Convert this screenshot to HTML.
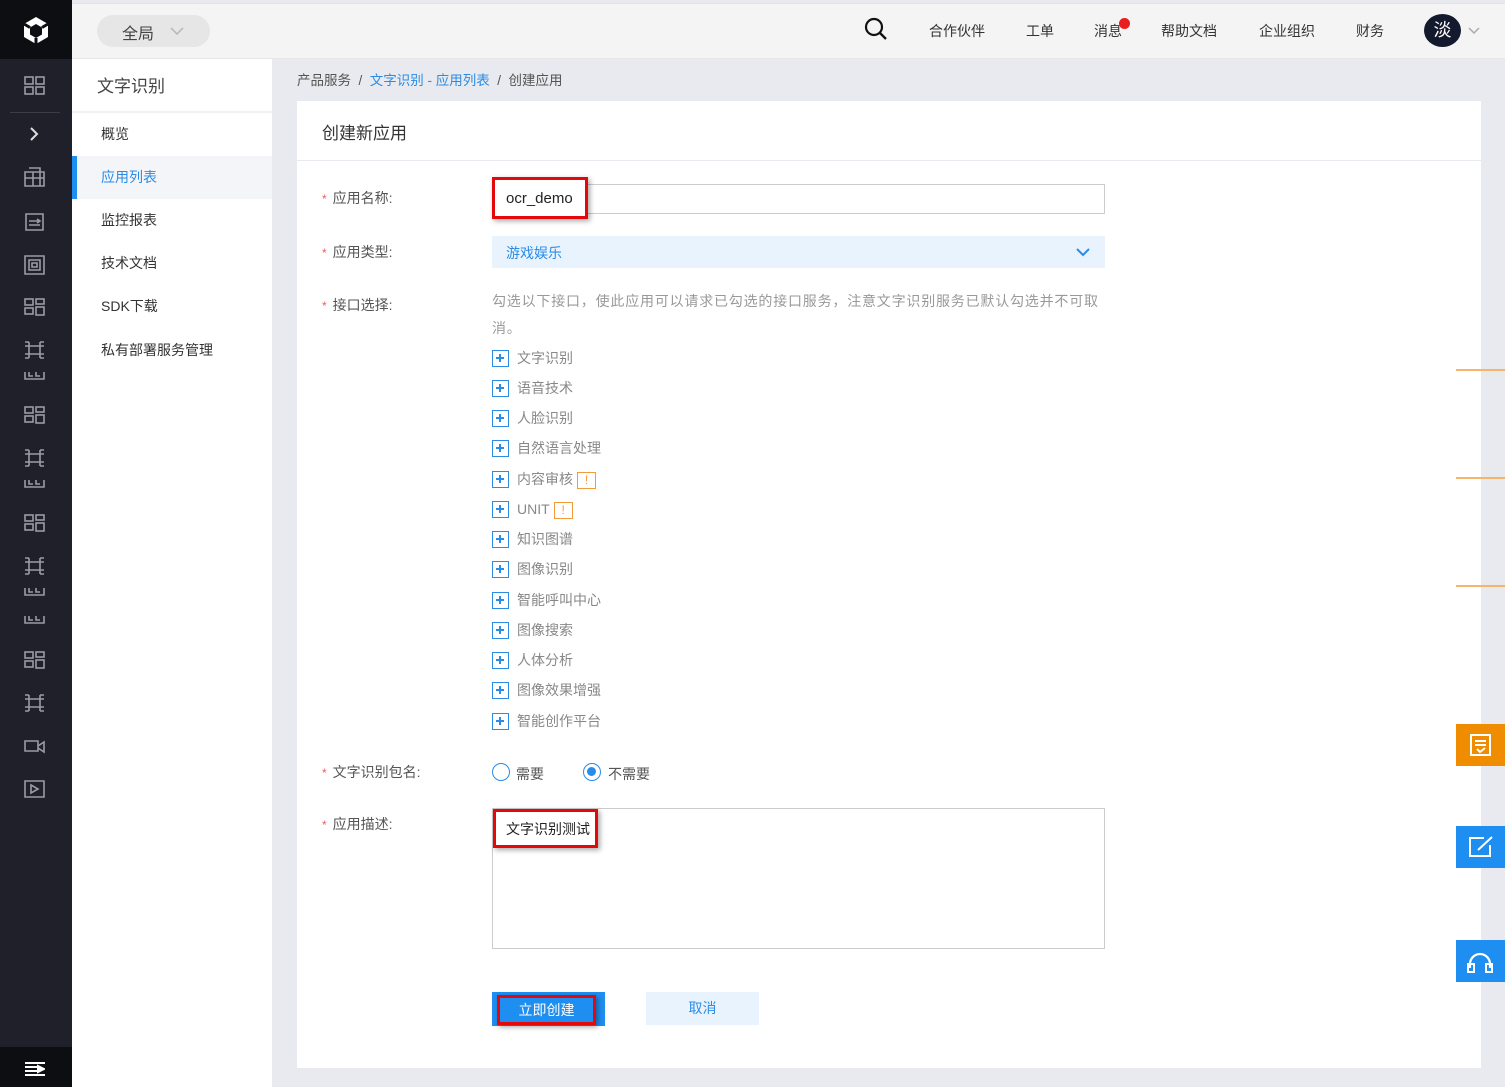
<!DOCTYPE html>
<html><head><meta charset="utf-8"><style>
*{margin:0;padding:0;box-sizing:border-box}
body{width:1505px;height:1087px;overflow:hidden;position:relative;background:#e8eaef;font-family:"Liberation Sans","Noto Sans CJK SC",sans-serif;color:#333;font-size:13px}
.a{position:absolute}
.side{left:0;top:0;width:72px;height:1087px;background:#1f2029}
.top{left:72px;top:3px;width:1433px;height:56px;background:#f4f4f4;border-top:1px solid #e2e2e2;border-bottom:1px solid #e6e6e6}
.nav{top:17px;font-size:14px;color:#333}
.sub{left:72px;top:59px;width:200px;height:1028px;background:#fff}
.mi{position:absolute;left:29px;font-size:14px;color:#333}
.card{left:297px;top:101px;width:1184px;height:967px;background:#fff}
.lbl{left:322px;font-size:14px;color:#555}
.lbl b{color:#f25c5c;font-weight:normal;margin-right:6px;font-size:12px}
.it{left:492px;font-size:14px;color:#888;height:18px;line-height:18px}
.it i{display:inline-block;width:17px;height:17px;border:1.5px solid #2b8ce6;vertical-align:middle;margin-right:8px;position:relative;top:-1px}
.it i:before{content:"";position:absolute;left:3px;top:6.5px;width:8px;height:2px;background:#2b8ce6}
.it i:after{content:"";position:absolute;left:6px;top:3.5px;width:2px;height:8px;background:#2b8ce6}
.warn{display:inline-block;width:19px;height:17px;border:1.5px solid #f39a3b;color:#f39a3b;text-align:center;line-height:14px;font-size:12px;vertical-align:middle;margin-left:4px}
.red{border:3px solid #e4080b;box-shadow:2px 2px 5px rgba(0,0,0,.35)}
.fb{left:1456px;width:49px;height:42px}
</style></head><body>
<div class="a side">
 <div class="a" style="left:0;top:0;width:72px;height:59px;background:#0d0e12"></div>
 <svg class="a" style="left:21px;top:15px" width="30" height="32" viewBox="0 0 30 32"><path d="M15 2 L27 9 L27 22 L15 29 L3 22 L3 9 Z M15 9 L9 12.5 L9 19.5 L15 23 L21 19.5 L21 12.5 Z" fill="#fff" fill-rule="evenodd"/><path d="M3 9 L9 12.5 M27 9 L21 12.5 M15 29 L15 23" stroke="#0d0e12" stroke-width="3"/></svg>
 <div class="a" style="left:10px;top:112px;width:50px;height:1px;background:#3a3c47"></div>
 <div class="a" style="left:0;top:1047px;width:72px;height:40px;background:#0d0e12"></div>
 <svg class="a" style="left:25px;top:1062px" width="20" height="14"><path d="M0 1h20M0 5h12M0 9h12M0 13h20M13 4l6 3-6 3z" stroke="#fff" stroke-width="2" fill="#fff"/></svg>
 <svg width="72" height="1087" class="a" style="left:0;top:0" fill="none" stroke="#9a9ba3" stroke-width="1.6">
  <g><rect x="25" y="77" width="8" height="7"/><rect x="36" y="77" width="8" height="7"/><rect x="25" y="87" width="8" height="7"/><rect x="36" y="87" width="8" height="7"/></g>
  <path d="M31 128l6 6-6 6" stroke="#ddd" stroke-width="2"/>
  <path d="M25 172h19v14H25zM29 168h11v18M25 178h19M33 172v14"/>
  <path d="M26 214h17v16H26zM29 221h11M29 225h11M37 219l3 2-3 2"/>
  <path d="M25 256h19v18H25zM29 260h11v10H29zM32 263h5v4h-5z"/>
  <g><rect x="25" y="299" width="8" height="6"/><rect x="36" y="299" width="8" height="5"/><rect x="25" y="308" width="8" height="6"/><rect x="36" y="307" width="8" height="8"/></g>
  <path d="M29 342v16M40 342v16M25 346h19M25 354h19M25 342h4M40 342h4M25 358h4M40 358h4"/>
  <path d="M25 372v7h19v-7M29 372v4h4M36 372v4h4"/>
  <g transform="translate(0,108)"><rect x="25" y="299" width="8" height="6"/><rect x="36" y="299" width="8" height="5"/><rect x="25" y="308" width="8" height="6"/><rect x="36" y="307" width="8" height="8"/></g>
  <g transform="translate(0,108)"><path d="M29 342v16M40 342v16M25 346h19M25 354h19M25 342h4M40 342h4M25 358h4M40 358h4"/><path d="M25 372v7h19v-7M29 372v4h4M36 372v4h4"/></g>
  <g transform="translate(0,216)"><rect x="25" y="299" width="8" height="6"/><rect x="36" y="299" width="8" height="5"/><rect x="25" y="308" width="8" height="6"/><rect x="36" y="307" width="8" height="8"/></g>
  <g transform="translate(0,216)"><path d="M29 342v16M40 342v16M25 346h19M25 354h19M25 342h4M40 342h4M25 358h4M40 358h4"/><path d="M25 372v7h19v-7M29 372v4h4M36 372v4h4"/></g>
  <g transform="translate(0,244)"><path d="M25 372v7h19v-7M29 372v4h4M36 372v4h4"/></g>
  <g transform="translate(0,353)"><rect x="25" y="299" width="8" height="6"/><rect x="36" y="299" width="8" height="5"/><rect x="25" y="308" width="8" height="6"/><rect x="36" y="307" width="8" height="8"/></g>
  <g transform="translate(0,353)"><path d="M29 342v16M40 342v16M25 346h19M25 354h19M25 342h4M40 342h4M25 358h4M40 358h4"/></g>
  <path d="M25 741h13v10H25zM38 746l6-4v10l-6-4"/>
  <path d="M25 781h19v16H25zM31 785l7 4-7 4z"/>
 </svg>
</div>
<div class="a top">
 <div class="a" style="left:25px;top:11px;width:113px;height:32px;border-radius:16px;background:#e6e6e6;font-size:16px;color:#444;padding:5px 0 0 25px">全局</div>
 <svg class="a" style="left:98px;top:23px" width="14" height="9"><path d="M1 1l6 6 6-6" stroke="#bbb" stroke-width="1.6" fill="none"/></svg>
 <svg class="a" style="left:792px;top:13px" width="24" height="24"><circle cx="10" cy="10" r="8" stroke="#111" stroke-width="2.2" fill="none"/><path d="M16 16l6 6" stroke="#111" stroke-width="2.4"/></svg>
 <div class="a nav" style="left:857px">合作伙伴</div>
 <div class="a nav" style="left:954px">工单</div>
 <div class="a nav" style="left:1022px">消息</div>
 <div class="a" style="left:1047px;top:14px;width:11px;height:11px;border-radius:50%;background:#e81f1f"></div>
 <div class="a nav" style="left:1089px">帮助文档</div>
 <div class="a nav" style="left:1187px">企业组织</div>
 <div class="a nav" style="left:1284px">财务</div>
 <div class="a" style="left:1352px;top:10px;width:37px;height:33px;border-radius:50%;background:#141a2e;color:#fff;font-size:18px;text-align:center;line-height:32px">淡</div>
 <svg class="a" style="left:1396px;top:23px" width="12" height="8"><path d="M1 1l5 5 5-5" stroke="#aaa" stroke-width="1.5" fill="none"/></svg>
</div>
<div class="a sub">
 <div class="a" style="left:25px;top:13px;font-size:17px;color:#444">文字识别</div>
 <div class="a" style="left:0;top:52px;width:200px;height:2px;background:#f0f1f4"></div>
 <div class="mi" style="top:65px">概览</div>
 <div class="a" style="left:0;top:97px;width:200px;height:43px;background:#f4f5f9;border-left:5px solid #1e8ef0"></div>
 <div class="mi" style="top:108px;color:#2b8ce6">应用列表</div>
 <div class="mi" style="top:151px">监控报表</div>
 <div class="mi" style="top:194px">技术文档</div>
 <div class="mi" style="top:237px">SDK下载</div>
 <div class="mi" style="top:281px">私有部署服务管理</div>
</div>
<div class="a" style="left:297px;top:69px;font-size:13.5px;color:#555">产品服务 &nbsp;/&nbsp; <span style="color:#2b8ce6">文字识别 - 应用列表</span> &nbsp;/&nbsp; 创建应用</div>
<div class="a card">
 <div class="a" style="left:25px;top:18px;font-size:17px;color:#333">创建新应用</div>
 <div class="a" style="left:0;top:59px;width:1184px;height:1px;background:#e8eaef"></div>
</div>
<div class="a lbl" style="top:188px"><b>*</b>应用名称:</div>
<div class="a" style="left:492px;top:184px;width:613px;height:30px;border:1px solid #ccc;background:#fff"></div>
<div class="a red" style="left:492px;top:177px;width:96px;height:42px;background:#fff;font-size:15px;color:#222;padding:10px 0 0 11px">ocr_demo</div>
<div class="a lbl" style="top:242px"><b>*</b>应用类型:</div>
<div class="a" style="left:492px;top:236px;width:613px;height:32px;background:#e8f3fd;color:#2b8ce6;padding:7px 0 0 14px;font-size:14px">游戏娱乐</div>
<svg class="a" style="left:1075px;top:247px" width="16" height="10"><path d="M2 2l6 6 6-6" stroke="#2b8ce6" stroke-width="2" fill="none"/></svg>
<div class="a lbl" style="top:295px"><b>*</b>接口选择:</div>
<div class="a" style="left:492px;top:288px;width:622px;font-size:14px;letter-spacing:0.8px;color:#999;line-height:27px">勾选以下接口，使此应用可以请求已勾选的接口服务，注意文字识别服务已默认勾选并不可取<br>消。</div>
<div class="a it" style="top:349px"><i></i>文字识别</div>
<div class="a it" style="top:379px"><i></i>语音技术</div>
<div class="a it" style="top:409px"><i></i>人脸识别</div>
<div class="a it" style="top:439px"><i></i>自然语言处理</div>
<div class="a it" style="top:470px"><i></i>内容审核<span class="warn">!</span></div>
<div class="a it" style="top:500px"><i></i>UNIT<span class="warn">!</span></div>
<div class="a it" style="top:530px"><i></i>知识图谱</div>
<div class="a it" style="top:560px"><i></i>图像识别</div>
<div class="a it" style="top:591px"><i></i>智能呼叫中心</div>
<div class="a it" style="top:621px"><i></i>图像搜索</div>
<div class="a it" style="top:651px"><i></i>人体分析</div>
<div class="a it" style="top:681px"><i></i>图像效果增强</div>
<div class="a it" style="top:712px"><i></i>智能创作平台</div>
<div class="a lbl" style="top:762px"><b>*</b>文字识别包名:</div>
<div class="a" style="left:492px;top:763px;width:18px;height:18px;border:1.5px solid #2b8ce6;border-radius:50%"></div>
<div class="a" style="left:516px;top:764px;color:#555;font-size:14px">需要</div>
<div class="a" style="left:583px;top:763px;width:18px;height:18px;border:1.5px solid #2b8ce6;border-radius:50%"><div style="margin:3px;width:9px;height:9px;border-radius:50%;background:#2b8ce6"></div></div>
<div class="a" style="left:608px;top:764px;color:#555;font-size:14px">不需要</div>
<div class="a lbl" style="top:814px"><b>*</b>应用描述:</div>
<div class="a" style="left:492px;top:808px;width:613px;height:141px;border:1px solid #ccc;background:#fff"></div>
<div class="a red" style="left:493px;top:809px;width:105px;height:39px;background:#fff;font-size:14px;color:#222;padding:7px 0 0 10px">文字识别测试</div>
<div class="a" style="left:492px;top:992px;width:113px;height:34px;background:#1e8ef0"></div>
<div class="a red" style="left:497px;top:995px;width:99px;height:30px;background:#1e8ef0;color:#fff;text-align:center;line-height:24px;font-size:14px">立即创建</div>
<div class="a" style="left:646px;top:992px;width:113px;height:33px;background:#e8f3fd;color:#2b8ce6;text-align:center;line-height:33px;font-size:14px">取消</div>
<div class="a" style="left:1456px;top:369px;width:49px;height:2px;background:#f5b46a"></div>
<div class="a" style="left:1456px;top:477px;width:49px;height:2px;background:#f5b46a"></div>
<div class="a" style="left:1456px;top:585px;width:49px;height:2px;background:#f5b46a"></div>
<div class="a fb" style="top:724px;background:#f08c00"><svg width="49" height="42"><path d="M15 11h19v20H15zM19 17h11M19 21h11M21 25l3 3 5-4" stroke="#fff" stroke-width="2" fill="none"/></svg></div>
<div class="a fb" style="top:826px;background:#1e8ef0"><svg width="49" height="42"><path d="M28 12H14v18h20V19M22 24l14-13" stroke="#fff" stroke-width="2" fill="none"/></svg></div>
<div class="a fb" style="top:940px;background:#1e8ef0"><svg width="49" height="42"><path d="M14 28v-4a10 10 0 0 1 20 0v4" stroke="#fff" stroke-width="2.2" fill="none"/><path d="M12 24h6v8h-6zM30 24h6v8h-6z" stroke="#fff" stroke-width="2" fill="none"/></svg></div>
</body></html>
